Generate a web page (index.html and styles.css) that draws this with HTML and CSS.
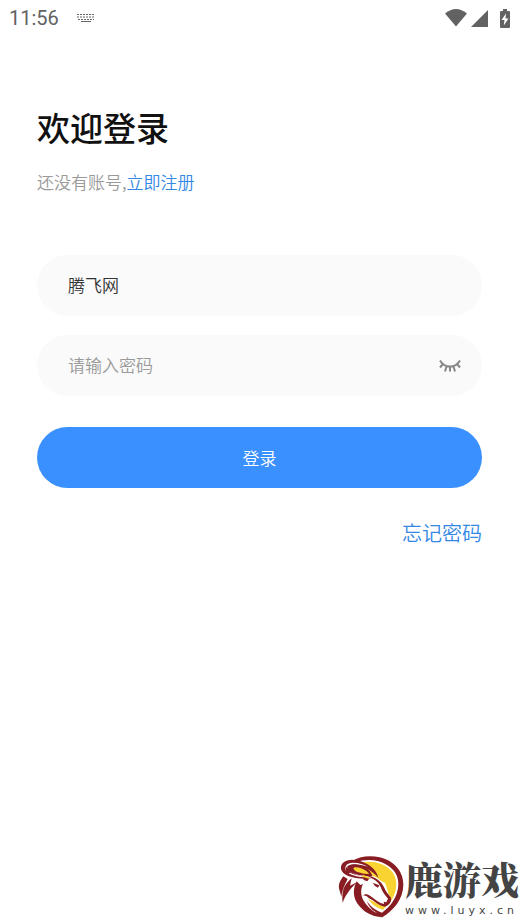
FILE: index.html
```html
<!DOCTYPE html>
<html lang="zh-CN">
<head>
<meta charset="utf-8">
<meta name="viewport" content="width=device-width, initial-scale=1">
<title>登录</title>
<link rel="stylesheet" href="styles.css">
</head>
<body>
<header class="status">
  <div class="status-group">
    <span class="clock">11:56</span>
    <svg class="keyboard" width="18" height="10" viewBox="0 0 18 10" aria-hidden="true">
      <path d="M0 1.500h18M0 4h18M1 6.500h16" stroke-dasharray="2 1"/>
      <path d="M4 8.500h10"/>
    </svg>
  </div>
  <div class="status-group status-icons">
    <svg width="22" height="18" viewBox="0 0 22 18" aria-hidden="true"><path d="M0 4.5Q11-4.5 22 4.5L11 17.5z"/></svg>
    <svg width="17" height="18" viewBox="0 0 17 18" aria-hidden="true"><path d="M17 1v17H0z"/></svg>
    <svg class="battery" width="10" height="19" viewBox="0 0 10 19" aria-hidden="true"><path d="M3 0h4v2h2q1 0 1 1v15q0 1-1 1H1q-1 0-1-1V3q0-1 1-1h2z"/><path class="bolt" d="M6 4.500 1.500 11H4.500L3.800 16.500 8.500 9.500H5.500z"/></svg>
  </div>
</header>
<main class="login">
  <h1>欢迎登录</h1>
  <p class="signup">还没有账号,<a href="#register">立即注册</a></p>
  <form>
    <div class="field">
      <input type="text" aria-label="账号" value="腾飞网">
    </div>
    <div class="field">
      <input type="password" aria-label="密码" placeholder="请输入密码">
      <button class="reveal" type="button" aria-label="显示密码">
        <svg width="22" height="14" viewBox="0 0 22 14" aria-hidden="true"><path d="M1 1.500Q4.500 7.500 11 7.500T21 1.500M3.500 5.500 1 8.500M7.500 7.500 6 12.500M14.500 7.500 16 12.500M18.500 5.500 21 8.500M11 7.500v5"/></svg>
      </button>
    </div>
    <button class="submit" type="submit">登录</button>
  </form>
  <a class="forgot" href="#forgot">忘记密码</a>
</main>
<footer class="brand">
  <svg class="emblem" width="70" height="70" viewBox="0 0 210 210" aria-hidden="true">
    <path class="maroon" d="M48 32C72 16 104 12 134 19C180 30 206 64 205 102C204 146 176 177 142 199C124 193 108 185 97 172L76 145L70 54z"/>
    <path class="white" d="M62 34C92 23 126 25 151 39C179 54 191 76 190 102C188 138 168 165 141 185C121 178 104 164 93 146L70 54z"/>
    <path class="yellow" d="M75 37C103 28 131 33 151 45C174 59 185 79 184 102C183 133 166 156 144 176C124 171 109 158 99 143L144 165L166 145L151 97L105 70z"/>
    <path class="white" d="M62 73C105 67 128 78 138 92C146 108 155 123 167 139C168 151 158 164 148 166C132 163 114 148 97 140C92 151 104 174 126 185C91 180 65 150 63 125z"/>
    <path class="maroon" d="M65 91C48 124 58 155 84 176C99 190 121 197 142 199C119 185 98 169 86 149C76 132 77 113 84 99L76 102z"/>
    <path class="maroon" d="M94 74C119 75 140 91 147 109C152 123 161 130 168 140C170 152 163 162 150 167C133 165 118 149 100 140C95 135 88 132 84 135C88 127 98 129 106 135C120 145 133 157 147 159L146 152L154 154L159 143C151 134 143 125 137 108C131 93 116 82 94 74z"/>
    <path class="maroon" d="M113 95L133 103L129 110L120 105z"/>
    <path class="maroon" d="M25 76C12 92 9 106 14 119L19 137C22 115 29 102 38 84zM50 82C26 101 19 121 23 156C31 132 45 114 67 93L45 104z"/>
    <path class="maroon" d="M110 82C60 87 20 73 18 53C16 33 38 21 67 28C104 38 124 56 130 80C110 58 87 46 62 42C42 39 35 45 39 54C50 70 78 76 110 82z"/>
    <path class="white" d="M35 63C25 47 35 35 54 35C72 35 88 41 99 47C75 39 55 37 42 43C31 49 31 55 35 63zM45 65C62 74 83 76 106 79C77 80 53 75 41 67z"/>
    <path class="maroon" d="M112 76C71 76 41 65 38 53C35 39 58 37 83 46C99 52 108 62 112 76z"/>
    <path class="yellow" d="M89 68C65 64 53 57 56 50C68 45 93 55 103 69z"/>
    <path class="yellow" d="M82 71L104 79L99 87L83 79z"/>
    <path class="maroon" d="M84 78L102 83L97 91L86 87z"/>
  </svg>
  <div class="brand-text">
    <strong>鹿游戏</strong>
    <span>www.luyx.cn</span>
  </div>
</footer>
</body>
</html>
```
FILE: styles.css
```css
* { box-sizing: border-box; }
body {
  margin: 0;
  min-height: 100vh;
  display: flex;
  flex-direction: column;
  background: #fff;
  color: #333;
  font: 350 17px/24px "Noto Sans CJK SC", sans-serif;
}
svg { display: block; }
a { color: #3388e5; text-decoration: none; }
.status {
  display: flex;
  justify-content: space-between;
  align-items: center;
  height: 36px;
  padding: 0 9px;
  color: #626262;
}
.status-group { display: flex; align-items: center; gap: 18px; }
.status-icons { gap: 4px; fill: #626262; }
.clock { font: 400 20px/24px Roboto, sans-serif; }
.keyboard { fill: none; stroke: #666; stroke-width: 1; }
.battery { margin-left: 8px; }
.bolt { fill: #fff; }
.login { flex: 1; padding: 66px 37px 0; }
h1 {
  margin: 0;
  color: #111;
  font-size: 33px;
  font-weight: 500;
  line-height: 50px;
}
.signup { margin: 18px 0 61px; color: #999; line-height: 24px; }
.field {
  display: flex;
  align-items: center;
  height: 61px;
  margin-bottom: 19px;
  padding: 0 21px 0 31px;
  border-radius: 31px;
  background: #fafafa;
}
input {
  flex: 1;
  min-width: 0;
  padding: 0 0 2px;
  border: 0;
  outline: 0;
  background: none;
  color: #333;
  font: inherit;
}
input::placeholder { color: #999; opacity: 1; }
button { padding: 0; border: 0; font: inherit; cursor: pointer; }
.reveal { background: none; }
.reveal svg { fill: none; stroke: #888; stroke-width: 2; }
.submit {
  width: 100%;
  height: 61px;
  margin-top: 12px;
  border-radius: 31px;
  background: #3a90ff;
  color: #fff;
}
.forgot { display: block; margin-top: 31px; font-size: 20px; line-height: 28px; text-align: right; }
.brand { display: flex; justify-content: flex-end; align-items: center; height: 72px; }
.emblem { flex: none; }
.maroon { fill: #871d23; }
.yellow { fill: #f9d331; }
.white { fill: #fff; }
.brand-text { display: flex; flex-direction: column; color: #444; }
.brand-text strong {
  font: 900 38px/50px "Noto Serif CJK SC", "Noto Sans CJK SC", serif;
}
.brand-text span {
  font: 400 11px/16px "DejaVu Sans", sans-serif;
  letter-spacing: 4px;
  width: 0;
  white-space: nowrap;
}
```
